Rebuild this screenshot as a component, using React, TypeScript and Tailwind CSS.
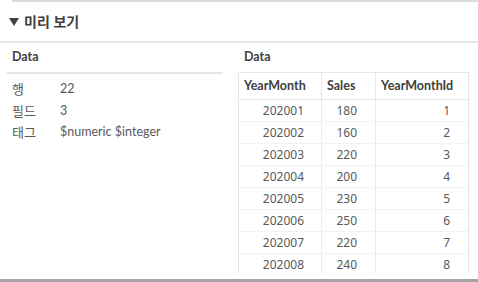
import React from "react";

const rows = [
  ["202001", "180", "1"],
  ["202002", "160", "2"],
  ["202003", "220", "3"],
  ["202004", "200", "4"],
  ["202005", "230", "5"],
  ["202006", "250", "6"],
  ["202007", "220", "7"],
  ["202008", "240", "8"],
];

const lato = { fontFamily: 'Lato, "Noto Sans", sans-serif' };

export default function App() {
  const font = { fontFamily: '"Noto Sans", "Noto Sans CJK KR", sans-serif' };
  return (
    <div className="w-[478px] h-[282px] bg-white overflow-hidden flex flex-col text-[#595959]" style={font}>
      <div className="ml-[12px] h-[2px] bg-[#dcdcdc] shrink-0" />
      <div className="h-[39px] flex items-center pl-[9px] gap-[5px] shrink-0">
        <svg width="10" height="8" viewBox="0 0 10 8">
          <path d="M0 0 L10 0 L5 8 Z" fill="#404040" />
        </svg>
        <span className="text-[14px] font-bold text-[#404040] leading-none">미리 보기</span>
      </div>
      <div className="h-[2px] bg-[#e6e6e6] shrink-0" />
      <div className="flex flex-1 min-h-0">
        <div className="w-[216px] ml-[7px] flex flex-col">
          <div className="h-[29px] flex items-end pb-[5px] pl-[5px] text-[12.5px] font-bold text-[#404040]" style={lato}>Data</div>
          <div className="h-[2px] bg-[#e6e6e6]" />
          <div className="pt-[5px] text-[13px]">
            {[
              ["행", "22"],
              ["필드", "3"],
              ["태그", "$numeric $integer"],
            ].map(([k, v]) => (
              <div key={k} className="flex h-[21.5px] items-center pl-[5px]">
                <span className="w-[48px]">{k}</span>
                <span className="text-[12.5px]" style={lato}>{v}</span>
              </div>
            ))}
          </div>
        </div>
        <div className="ml-[15px] w-[231px] flex flex-col">
          <div className="h-[29px] flex items-end pb-[5px] pl-[6px] text-[12.5px] font-bold text-[#404040]" style={lato}>Data</div>
          <div className="h-[201px] overflow-hidden border-l border-r border-t border-[#e6e6e6]">
            <div className="flex h-[27px] items-center text-[12.5px] font-bold text-[#404040] border-b border-[#e6e6e6]" style={lato}>
              <div className="w-[83px] h-full flex items-center pl-[5px] border-r border-[#e6e6e6]">YearMonth</div>
              <div className="w-[54px] h-full flex items-center pl-[5px] border-r border-[#e6e6e6]">Sales</div>
              <div className="flex-1 h-full flex items-center pl-[5px]">YearMonthId</div>
            </div>
            {rows.map((r) => (
              <div key={r[0]} className="flex h-[22px] text-[12px] border-b border-[#f3f3f3]">
                <div className="w-[83px] flex items-center justify-end pr-[17px] border-r border-[#ececec]">{r[0]}</div>
                <div className="w-[54px] flex items-center justify-end pr-[18px] border-r border-[#ececec]">{r[1]}</div>
                <div className="flex-1 flex items-center justify-end pr-[18px]">{r[2]}</div>
              </div>
            ))}
          </div>
        </div>
      </div>
      <div className="h-[3px] bg-[#a6a6a6] shrink-0" />
    </div>
  );
}
